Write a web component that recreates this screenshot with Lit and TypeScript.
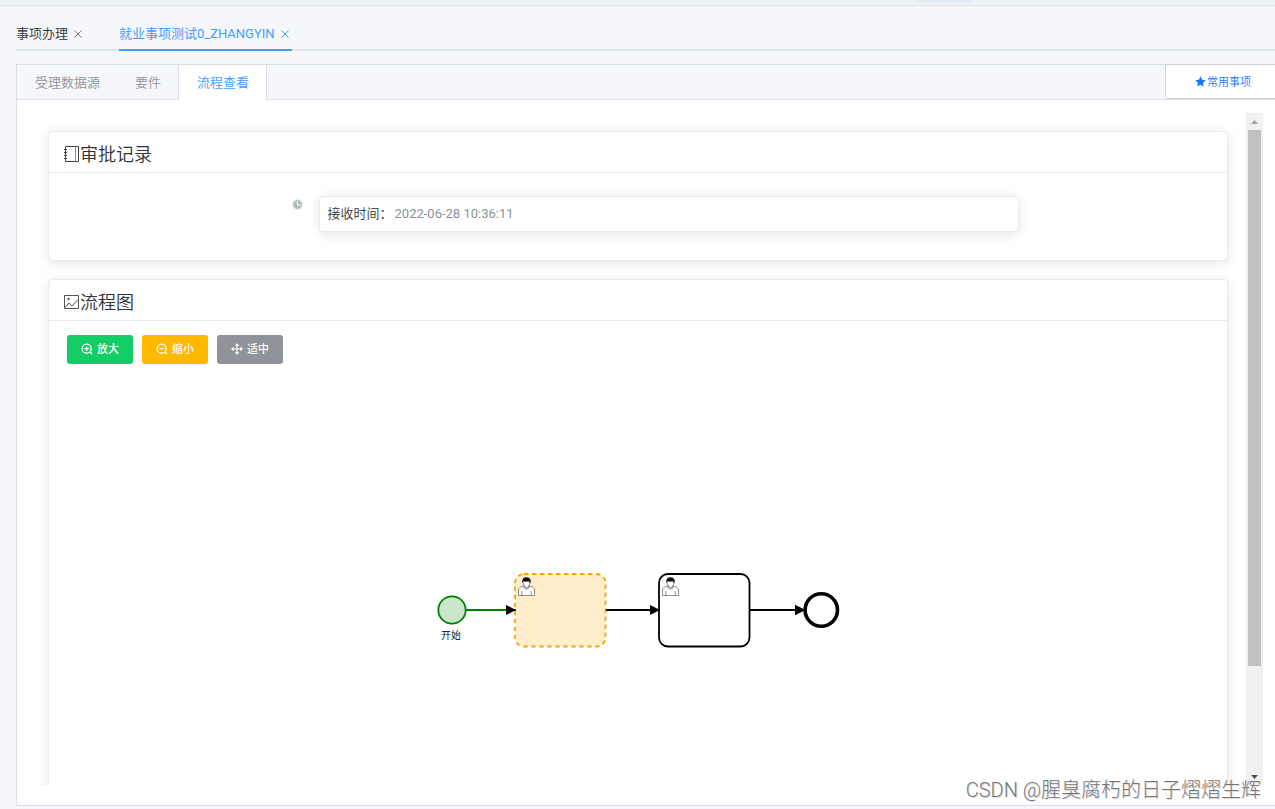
import { LitElement, html, css, svg } from "lit";
import { customElement, state } from "lit/decorators.js";

const userFigure = (x: number, y: number) => svg`
  <g transform="translate(${x} ${y})" stroke="#222" stroke-width=".5" fill="#fff">
    <path d="M.5 18V12.500Q.5 9.500 5.500 8.600L11.500 8.600Q16.500 9.500 16.500 12.500V18Z"/>
    <path d="M3.800 18v-4.500M13.200 18v-4.500M5.500 8.600q.300 3 3 3t3-3" fill="none"/>
    <path d="M4.900 4.200q0 2.600 1.700 4.300.300 1.800 1.900 1.800t1.900-1.800q1.700-1.700 1.700-4.300"/>
    <path d="M4.500 5.200Q3.800 0 8.500 0T12.500 5.200Q11.600 3.300 9.900 3.800 7 4.100 5.600 3.500 4.900 4 4.500 5.200Z" fill="#111"/>
  </g>`;

@customElement("flow-diagram")
export class FlowDiagram extends LitElement {
  static styles = css`
    :host { display: flex; justify-content: center; }
    svg { display: block; }
    .label { font: 350 10px Roboto, "Noto Sans CJK SC", sans-serif; text-anchor: middle; fill: #000; }
  `;
  render() {
    return html`<svg width="404" height="84" viewBox="436 568 404 84" role="img" aria-label="流程图">
      <defs>
        <marker id="arrow" viewBox="0 0 10 10" refX="10" refY="5" markerWidth="10.500" markerHeight="10.500" markerUnits="userSpaceOnUse" orient="auto">
          <path d="M0 0L10 5L0 10Z"/>
        </marker>
      </defs>
      <circle cx="452" cy="610" r="13.700" fill="#cce6cc" stroke="#008000" stroke-width="1.800"/>
      <text class="label" x="451" y="639">开始</text>
      <rect x="515" y="574" width="90.500" height="72.500" rx="9" fill="#ffedcc" stroke="#ffa500" stroke-width="1.800" stroke-dasharray="4.500 3.500"/>
      <rect x="659" y="574" width="90.500" height="72.500" rx="9" fill="#fff" stroke="#000" stroke-width="1.800"/>
      <path d="M466 610H516" stroke="#008000" stroke-width="1.800" marker-end="url(#arrow)"/>
      <path d="M606 610H660" stroke="#000" stroke-width="1.800" marker-end="url(#arrow)"/>
      <circle cx="821.300" cy="610" r="16.200" fill="#fff" stroke="#000" stroke-width="3.600"/>
      <path d="M750 610H805.500" stroke="#000" stroke-width="1.800" marker-end="url(#arrow)"/>
      ${userFigure(518, 577.5)} ${userFigure(662, 577.5)}
    </svg>`;
  }
}

@customElement("app-root")
export class AppRoot extends LitElement {
  static styles = css`
    :host {
      display: flex; flex-direction: column; box-sizing: border-box; height: 100vh; overflow: hidden;
      position: relative; background: #f5f7fb; color: #303133;
      font: 350 13px/20px Roboto, "Noto Sans CJK SC", sans-serif;
    }
    * { box-sizing: border-box; }
    button { font: inherit; cursor: pointer; margin: 0; }
    svg { display: block; flex: none; }
    .topbar { flex: none; height: 6px; background: #f0f2f5; border-bottom: 1px solid #e1e4eb; display: flex; justify-content: flex-end; }
    .hint { width: 54px; height: 2px; margin-right: 303px; background: #e3ebf8; }
    .pages { flex: none; display: flex; gap: 34px; height: 45px; margin-left: 16px; border-bottom: 2px solid #e1e4eb; }
    .page { display: flex; align-items: center; gap: 3px; height: 45px; padding-top: 12px; border-bottom: 2px solid transparent; }
    .page.active { border-bottom-color: #409eff; color: #409eff; font-weight: 400; }
    .link { border: 0; background: none; padding: 0; color: inherit; }
    .close { border: 0; background: none; padding: 3px; color: #777; display: block; }
    .active .close { color: #409eff; }
    .panel { flex: 1; min-height: 0; display: flex; flex-direction: column; margin: 13px 0 3px 16px; background: #fff; border: 1px solid #dadee8; border-right: 0; }
    .tabs { flex: none; display: flex; height: 35px; background: #f5f7fb; border-bottom: 1px solid #dfe3ec; }
    .tab { height: 35px; padding: 1px 17px 0 18px; border: 0; background: none; color: #909399; }
    .tab.active { background: #fff; color: #409eff; border: solid #dadee8; border-width: 0 1px; }
    .common { margin: -1px -6px 0 auto; padding: 2px 0 0; width: 116px; height: 35px; display: flex; align-items: center; justify-content: center; gap: 1px; border: 1px solid #d0d2d6; border-radius: 3px; background: #fff; color: #1677ff; font-size: 11px; }
    .common svg { margin-bottom: 2px; }
    .body { flex: 1; min-height: 0; display: flex; margin: 13px 12px 20px 15px; }
    .view { flex: 1; min-width: 0; overflow: hidden; padding: 18px 18px 0 16px; }
    .bar { width: 17px; background: #f1f1f1; display: flex; flex-direction: column; color: #505050; }
    .step { height: 17px; width: 17px; padding: 0; border: 0; background: none; display: grid; place-items: center; color: inherit; }
    .step.off { color: #a3a3a3; }
    .track { flex: 1; padding: 0 2px; }
    .thumb { height: 84%; background: #c1c1c1; }
    .card { border: 1px solid #e6ebf5; border-radius: 4px; background: #fff; box-shadow: 0 2px 12px rgba(0, 0, 0, .1); }
    .card + .card { margin-top: 18px; }
    .title { margin: 0; height: 41px; padding: 5px 14px 0; display: flex; align-items: center; gap: 1px; font-size: 18px; line-height: 28px; font-weight: 350; border-bottom: 1px solid #e6ebf5; }
    .title svg { margin-bottom: 2px; }
    .records { display: flex; justify-content: center; gap: 16px; height: 87px; margin-left: 34px; padding: 23px 0; }
    .clock { margin: 3px 0 0; }
    .record { width: 700px; height: 36px; margin: 0; padding: 7px 8px; display: flex; gap: 2px; }
    .record time { color: #8c919b; font-weight: 400; }
    .tools { display: flex; gap: 9px; padding: 14px 18px 0; }
    .tool { width: 66px; height: 29px; display: flex; align-items: center; justify-content: center; gap: 4px; padding: 0; border: 0; border-radius: 3px; color: #fff; font-size: 11px; font-weight: 500; }
    .tool svg { margin-bottom: 1px; }
    .green { background: #13ce66; }
    .amber { background: #ffba00; }
    .gray { background: #909399; }
    .canvas { padding: 204px 0 180px; }
    .mark { position: absolute; right: 14px; bottom: 4px; font: 300 20px/30px Roboto, "Noto Sans CJK SC", sans-serif; color: #777; text-shadow: 1px 1px 0 #ddd; white-space: nowrap; pointer-events: none; }
  `;

  @state() private tab = "流程查看";
  private pages = ["事项办理", "就业事项测试0_ZHANGYIN"];

  private icon(size: number, body: unknown, width = 1) {
    return html`<svg width=${size} height=${size} viewBox="0 0 16 16" fill="none" stroke="currentColor" stroke-width=${width} aria-hidden="true">${body}</svg>`;
  }

  render() {
    return html`
      <div class="topbar"><div class="hint"></div></div>
      <nav class="pages">
        ${this.pages.map((p, i) => html`<div class="page ${i ? "active" : ""}">
          <button class="link">${p}</button>
          <button class="close" aria-label="关闭"><svg width="8" height="8" viewBox="0 0 8 8" stroke="currentColor" stroke-width="1"><path d="M.5.5l7 7M7.500.5l-7 7"/></svg></button>
        </div>`)}
      </nav>
      <main class="panel">
        <div class="tabs" role="tablist">
          ${["受理数据源", "要件", "流程查看"].map((t) => html`<button role="tab" class="tab ${t === this.tab ? "active" : ""}"
            aria-selected=${t === this.tab} @click=${() => (this.tab = t)}>${t}</button>`)}
          <button class="common">
            <svg width="11" height="11" viewBox="0 0 16 16" fill="currentColor"><path d="M8 .5l2.300 4.900 5.400.7-4 3.700 1 5.400L8 12.600l-4.700 2.600 1-5.400-4-3.700 5.400-.7z"/></svg>常用事项
          </button>
        </div>
        <div class="body">
          <div class="view">
            <section class="card">
              <h2 class="title">${this.icon(16, svg`<path d="M2.500.5h13v15h-13z" stroke="#444"/><path d="M12.500.5v15" stroke="#888"/><path d="M1 3.500h3M1 6.500h3M1 9.500h3M1 12.500h3" stroke="#444"/>`)}审批记录</h2>
              <div class="records">
                <svg class="clock" width="11" height="11" viewBox="0 0 11 11"><circle cx="5.500" cy="5.500" r="5.200" fill="#dce3df"/><circle cx="5.500" cy="5.500" r="4.200" fill="#b0bdb8"/><path d="M5.500 2.500V6H8.500" fill="none" stroke="#fff" stroke-width="1.200"/></svg>
                <p class="card record"><span>接收时间：</span><time datetime="2022-06-28T10:36:11">2022-06-28 10:36:11</time></p>
              </div>
            </section>
            <section class="card">
              <h2 class="title">${this.icon(16, svg`<path d="M1.500 1.500h14v13h-14zM2 13.500l4-4.500 3 3L15 5.500" stroke="#555"/><circle cx="5.500" cy="5" r="1.200" fill="#555" stroke="none"/>`)}流程图</h2>
              <div class="tools">
                <button class="tool green">${this.icon(12, svg`<circle cx="7.500" cy="7.500" r="6"/><path d="M11.800 11.800L14.700 14.700M7.500 4.500v6M4.500 7.500h6"/>`, 1.7)}放大</button>
                <button class="tool amber">${this.icon(12, svg`<circle cx="7.500" cy="7.500" r="6"/><path d="M11.800 11.800L14.700 14.700M4.500 7.500h6"/>`, 1.7)}缩小</button>
                <button class="tool gray">${this.icon(12, svg`<path d="M8 1.500v13M1.500 8h13M5.800 3.500l2.200-2.200 2.200 2.200M5.800 12.500l2.200 2.200 2.200-2.200M3.500 5.800l-2.200 2.200 2.200 2.200M12.500 5.800l2.200 2.200-2.200 2.200"/>`, 1.6)}适中</button>
              </div>
              <div class="canvas"><flow-diagram></flow-diagram></div>
            </section>
          </div>
          <div class="bar">
            <button class="step off" aria-label="向上滚动"><svg width="7" height="4" viewBox="0 0 7 4" fill="currentColor"><path d="M0 4L3.500 0L7 4z"/></svg></button>
            <div class="track"><div class="thumb"></div></div>
            <button class="step" aria-label="向下滚动"><svg width="7" height="4" viewBox="0 0 7 4" fill="currentColor"><path d="M0 0L3.500 4L7 0z"/></svg></button>
          </div>
        </div>
      </main>
      <div class="mark">CSDN @腥臭腐朽的日子熠熠生辉</div>`;
  }
}
